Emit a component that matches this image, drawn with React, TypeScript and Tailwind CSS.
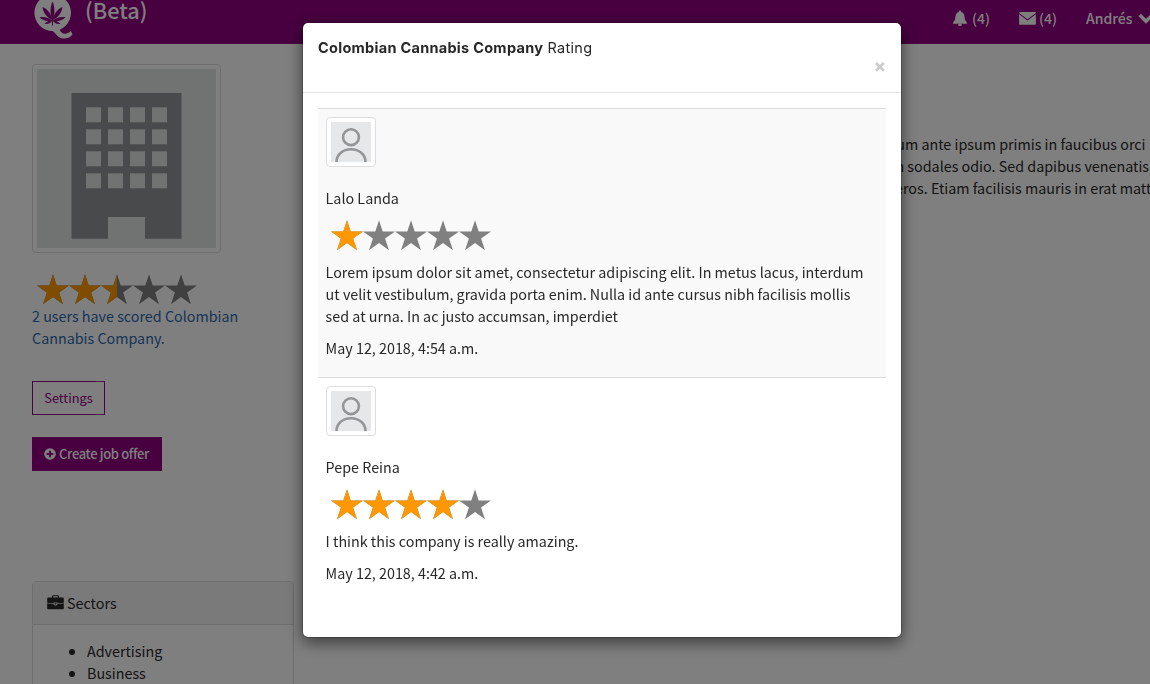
import React from "react";

type Review = {
  id: number;
  name: string;
  score: number;
  comment: string[];
  date: string;
};

const reviews: Review[] = [
  {
    id: 1,
    name: "Lalo Landa",
    score: 1,
    comment: [
      "Lorem ipsum dolor sit amet, consectetur adipiscing elit. In metus lacus, interdum",
      "ut velit vestibulum, gravida porta enim. Nulla id ante cursus nibh facilisis mollis",
      "sed at urna. In ac justo accumsan, imperdiet",
    ],
    date: "May 12, 2018, 4:54 a.m.",
  },
  {
    id: 2,
    name: "Pepe Reina",
    score: 4,
    comment: ["I think this company is really amazing."],
    date: "May 12, 2018, 4:42 a.m.",
  },
];

const sectors = ["Advertising", "Business"];

const STAR =
  "M16 1.2 L19.7 12.5 L32 12.5 L22.1 19.6 L26 31.3 L16 24.1 L6 31.3 L9.9 19.6 L0 12.5 L12.3 12.5 Z";

const Stars: React.FC<{ score: number }> = ({ score }) => (
  <svg width="160" height="32" viewBox="0 0 160 32" className="block">
    {[0, 1, 2, 3, 4].map((i) => {
      const part = Math.max(0, Math.min(1, score - i));
      return (
        <g key={i} transform={`translate(${i * 32} 0)`}>
          <path d={STAR} fill="#808080" />
          {part === 1 && <path d={STAR} fill="#ff9800" />}
          {part === 0.5 && (
            <path
              d="M16 1.2 L16 24.1 L6 31.3 L9.9 19.6 L0 12.5 L12.3 12.5 Z"
              fill="#ff9800"
            />
          )}
        </g>
      );
    })}
  </svg>
);

const Logo = () => (
  <svg width="40" height="44" viewBox="0 0 40 44" className="block shrink-0">
    <circle cx="18.7" cy="12.8" r="18.3" fill="#fff" />
    <path
      d="M18 30 L25.5 29.5 C27.5 34 31.5 35.5 37 31 L38.5 34.5 C35.5 38.2 31.5 39 28 38.4 C23 37.5 21.5 32.5 18 30.8 Z"
      fill="#fff"
    />
    <g fill="#900080">
      <path d="M18.5 1.5 C21.2 8 20.8 13 18.9 20 H18.1 C16.2 13 15.8 8 18.5 1.5 Z" />
      <path d="M8.5 7 C14.5 9.5 17 14 18.5 20 C12.5 17.5 9.5 13 8.5 7 Z" />
      <path d="M28.5 7 C22.5 9.5 20 14 18.5 20 C24.5 17.5 27.500 13 28.500 7 Z" />
      <path d="M5.500 17.300 C11 16.500 15 18 18.500 20.500 C13 22 9 20.800 5.500 17.300 Z" />
      <path d="M31.500 17.300 C26 16.500 22 18 18.500 20.500 C24 22 28 20.800 31.500 17.300 Z" />
      <path d="M10.500 24 C13 21.500 15.500 20.500 18.500 20.300 C17 23 14.500 24.500 10.500 24 Z" />
      <path d="M26.500 24 C24 21.500 21.500 20.500 18.500 20.300 C20 23 22.500 24.500 26.500 24 Z" />
      <path d="M18 20 H19 V25.500 H18 Z" />
    </g>
  </svg>
);

const BellIcon = () => (
  <svg width="16" height="17" viewBox="0 0 16 17" fill="currentColor">
    <path d="M8 0.5 C8.8 0.5 9.2 1.1 9.2 1.9 C11.2 2.4 12.3 4 12.5 6.2 C12.7 8.8 13 10 14 11.3 C14.6 12.1 15 12.7 15 13.8 H1 C1 12.7 1.4 12.1 2 11.3 C3 10 3.3 8.8 3.5 6.2 C3.7 4 4.8 2.4 6.8 1.9 C6.8 1.1 7.2 0.5 8 0.5 Z" />
    <path d="M6 13.8 H10 C9.8 15.5 9.1 16.3 8 16.3 C6.9 16.3 6.2 15.5 6 13.8 Z" />
  </svg>
);

const EnvelopeIcon = () => (
  <svg width="17" height="13" viewBox="0 0 17 13" fill="currentColor">
    <path d="M1 0 H16 C16.5 0 16.9 0.4 16.9 1 L8.5 7.3 L0.1 1 C0.1 0.4 0.5 0 1 0 Z" />
    <path d="M0.1 2.2 L8.5 8.6 L16.9 2.2 V11.8 C16.9 12.4 16.5 12.8 15.9 12.8 H1.1 C0.5 12.8 0.1 12.4 0.1 11.8 Z" />
  </svg>
);

const ChevronIcon = () => (
  <svg width="16" height="11" viewBox="0 0 16 11" fill="none" className="mt-px shrink-0">
    <path d="M1.7 2 L8 8.3 L14.3 2" stroke="currentColor" strokeWidth="3.4" />
  </svg>
);

const BriefcaseIcon = () => (
  <svg width="17" height="15" viewBox="0 0 17 15" fill="currentColor" className="-mt-[2px]">
    <path
      d="M5 2.5 V1.4 C5 0.7 5.5 0.2 6.2 0.2 H10.8 C11.5 0.2 12 0.7 12 1.4 V2.5 H15.5 C16.3 2.5 16.8 3 16.8 3.8 V7.7 L10.5 8.5 V7.6 H6.5 V8.5 L0.2 7.7 V3.8 C0.2 3 0.7 2.5 1.5 2.5 Z M6.2 1.3 V2.5 H10.8 V1.3 Z"
      fillRule="evenodd"
    />
    <path d="M0.2 8.3 L6.7 9.2 C7 10.1 7.7 10.4 8.5 10.4 C9.3 10.4 10 10.1 10.3 9.2 L16.8 8.3 V13.2 C16.8 13.8 16.4 14.2 15.8 14.2 H1.2 C0.6 14.2 0.2 13.8 0.2 13.2 Z" />
    <path d="M7.5 8.2 H9.5 V8.8 C9.5 9.7 7.5 9.7 7.5 8.8 Z" />
  </svg>
);

const PlusIcon = () => (
  <svg width="12" height="12" viewBox="0 0 12 12" className="block shrink-0">
    <circle cx="6" cy="6" r="5.8" fill="#fff" />
    <path d="M6 2.7 V9.3 M2.7 6 H9.3" stroke="#900080" strokeWidth="2" />
  </svg>
);

const Building = () => (
  <svg width="179" height="179" viewBox="0 0 179 179" className="block bg-[#e2e6e4]">
    <path d="M34.5 24 H144.5 V169.7 H108 V148 H71 V169.7 H34.5 Z" fill="#929496" />
    {[38.3, 60.3, 82.3, 104.3].map((y) =>
      [49, 71, 93, 115].map((x) => (
        <rect key={`${x}-${y}`} x={x} y={y} width="15" height="15" fill="#e2e6e4" />
      ))
    )}
  </svg>
);

const Avatar = () => (
  <div className="size-[50px] rounded border border-[#ddd] bg-white p-1">
    <svg width="40" height="40" viewBox="0 0 40 40" fill="none" className="block bg-[#e6e7e9]">
      <circle cx="20" cy="15.2" r="7.9" stroke="#939598" strokeWidth="2.6" />
      <path
        d="M5.5 40 C5.5 32.5 12 27.3 20 27.3 C28 27.3 34.5 32.5 34.5 40"
        stroke="#939598"
        strokeWidth="2.6"
      />
    </svg>
  </div>
);

const ReviewRow: React.FC<{ data: Review }> = ({ data }) => (
  <div className="border-t border-[#ddd] p-2 pb-[18px] odd:bg-[#f9f9f9]">
    <Avatar />
    <p className="mt-[20px]">{data.name}</p>
    <div className="mt-[10px] mb-[10px] pl-[5px]">
      <Stars score={data.score} />
    </div>
    {data.comment.map((line) => (
      <p key={line} className="whitespace-nowrap">
        {line}
      </p>
    ))}
    <p className="mt-[10px]">{data.date}</p>
  </div>
);

const RatingModal = () => (
  <div className="fixed inset-0 bg-black/50">
    <div className="mt-[22px] ml-[302px] h-[616px] w-[600px] rounded-md border border-black/20 bg-white bg-clip-padding shadow-[0_5px_15px_rgba(0,0,0,0.5)]">
      <div className="h-[70px] border-b border-[#e5e5e5] px-[15px] pt-[15px] font-['Inter','Liberation_Sans',sans-serif]">
        <h4 className="h-[19px] text-[14.5px] leading-[20px] tracking-[0.28px] whitespace-nowrap">
          <strong className="font-bold">Colombian Cannabis Company</strong> Rating
        </h4>
        <div className="flex justify-end">
          <button className="h-[18px] text-[18px] leading-[18px] font-extrabold text-[#ccc]">×</button>
        </div>
      </div>
      <div className="p-[15px] pl-[14.600px]">
        {reviews.map((r) => (
          <ReviewRow key={r.id} data={r} />
        ))}
      </div>
    </div>
  </div>
);

const App = () => {
  return (
    <div className="h-[684px] w-[1150px] overflow-hidden bg-white font-['Noto_Sans_CJK_SC',sans-serif] text-[14.32px] leading-[22px] text-[#282828]">
      <header className="flex h-[44px] items-start overflow-hidden bg-[#900080] pl-[34px] text-white">
        <Logo />
        <span className="-mt-px ml-[11px] w-[867px] shrink-0 text-[21.7px] leading-[22px] font-medium">
          (Beta)
        </span>
        <div className="flex shrink-0 pt-[7px] text-[14px] font-medium">
          <span className="flex w-[67px] items-center gap-[4px]">
            <BellIcon /> (4)
          </span>
          <span className="flex w-[67px] items-center gap-[3px]">
            <EnvelopeIcon /> (4)
          </span>
          <span className="flex items-center gap-[6px]">
            Andrés <ChevronIcon />
          </span>
        </div>
      </header>

      <div className="flex">
        <aside className="ml-[32px] w-[262px] shrink-0 pt-[20px]">
          <div className="size-[189px] rounded border border-[#ddd] bg-white p-1">
            <Building />
          </div>
          <div className="mt-[20px] pl-[5px]">
            <Stars score={2.5} />
          </div>
          <a className="block text-[#2c6aad]">
            2 users have scored Colombian
            <br />
            Cannabis Company.
          </a>
          <button className="mt-[32px] block h-[34px] w-[73px] border border-[#900080] text-[12.8px] text-[#900080]">
            Settings
          </button>
          <button className="mt-[22px] flex h-[34px] w-[130px] items-center justify-center gap-[3px] bg-[#900080] pr-px text-[13px] font-medium tracking-[-0.35px] whitespace-nowrap text-white">
            <PlusIcon /> Create job offer
          </button>
          <div className="mt-[110px] h-[150px] rounded border border-[#ddd]">
            <div className="flex h-[43px] items-center gap-[3px] border-b border-[#ddd] bg-[#f5f5f5] pl-[14px]">
              <BriefcaseIcon /> Sectors
            </div>
            <ul className="list-disc pt-[15px] pl-[54px]">
              {sectors.map((s) => (
                <li key={s}>{s}</li>
              ))}
            </ul>
          </div>
        </aside>
        <main className="ml-[524px] pt-[89px] whitespace-nowrap">
          <p className="ml-[25px]">Vestibulum ante ipsum primis in faucibus orci</p>
          <p className="ml-[60px]">non sodales odio. Sed dapibus venenatis</p>
          <p className="ml-[77px]">eros. Etiam facilisis mauris in erat mattis</p>
        </main>
      </div>

      <RatingModal />
    </div>
  );
};

export default App;
